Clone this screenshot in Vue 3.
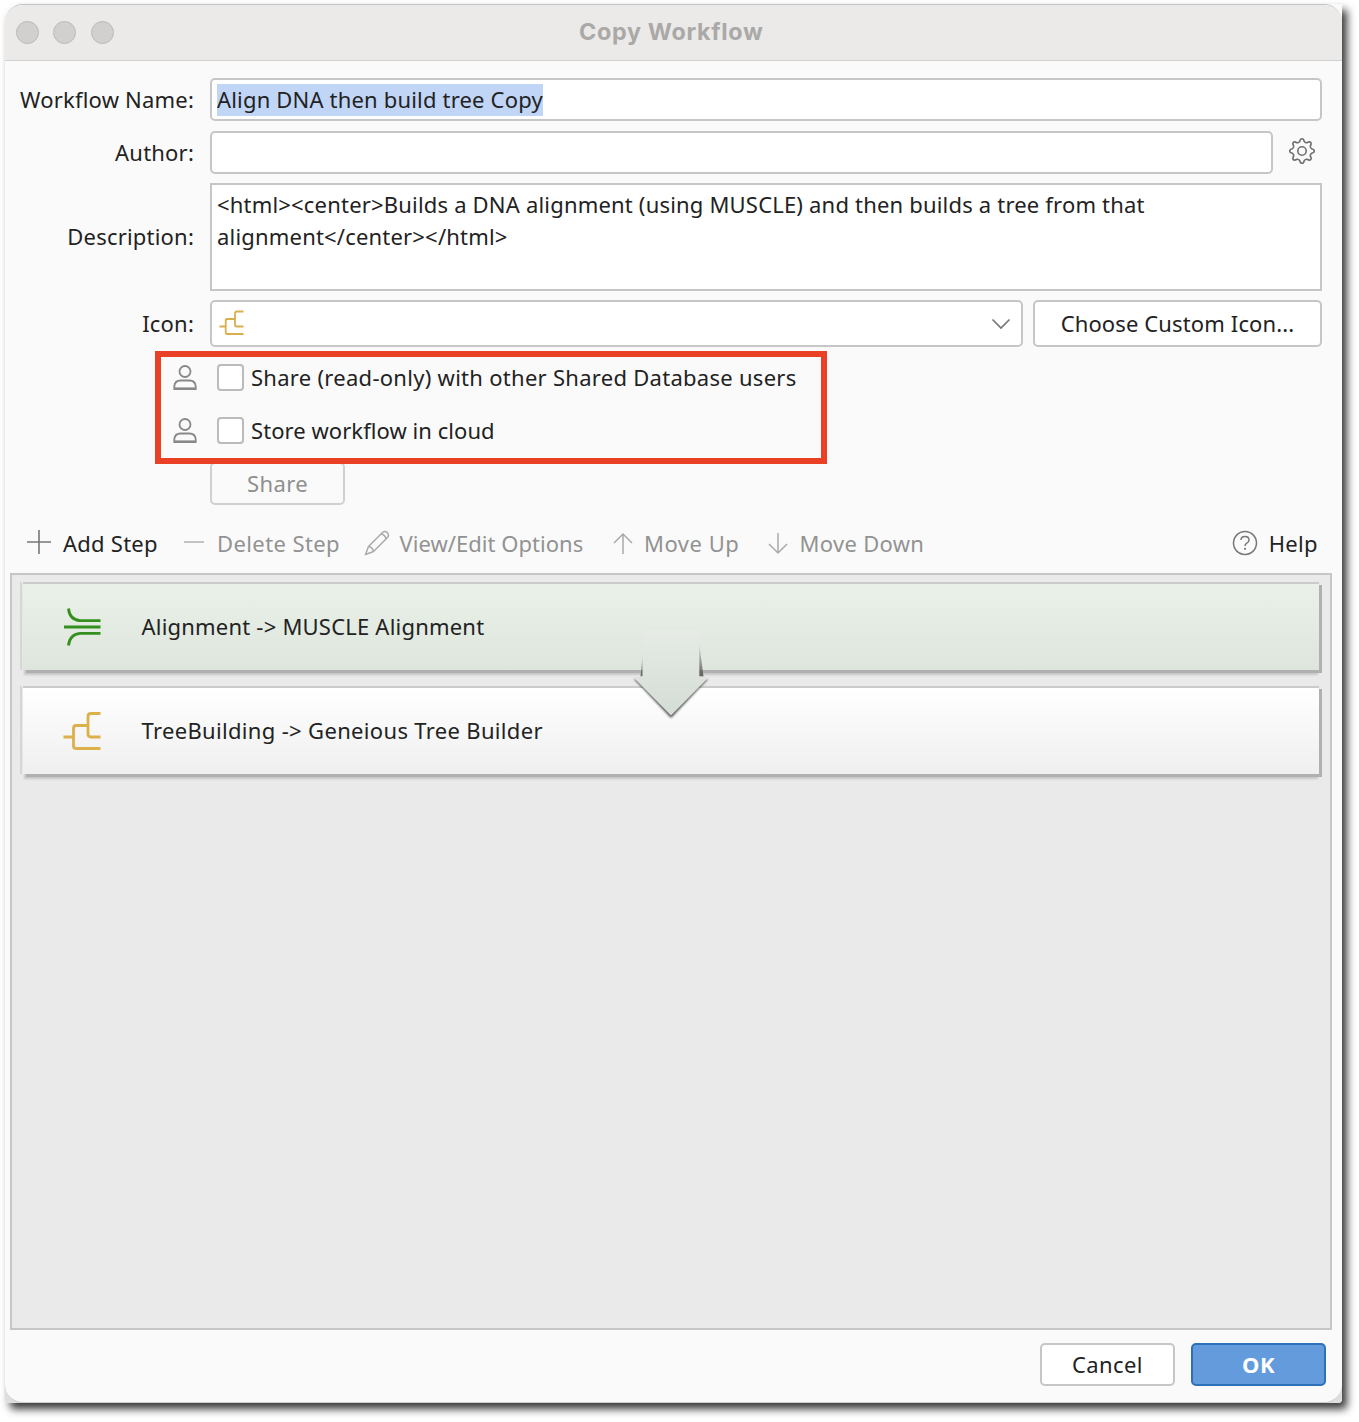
<script setup>
const shareOptions = [
  { label: 'Share (read-only) with other Shared Database users', cls: 't-share' },
  { label: 'Store workflow in cloud', cls: 't-store' },
]
</script>

<template>
  <div class="page">
    <div class="shell">
      <div class="window">
        <header class="titlebar">
          <div class="lights"><i></i><i></i><i></i></div>
          <h1><span>Copy Workflow</span></h1>
        </header>

        <main class="form">
          <div class="row name">
            <label><span class="t-name">Workflow Name:</span></label>
            <div class="field"><span class="selected"><span class="t-value">Align DNA then build tree Copy</span></span></div>
          </div>
          <div class="row author">
            <label><span class="t-author">Author:</span></label>
            <div class="field"></div>
            <svg class="gear" width="28" height="28" viewBox="-14 -14 28 28" fill="none" stroke="#707070" stroke-width="1.6" stroke-linejoin="round">
              <path d="M-2.3 -9.500Q-1.700 -12.300 0 -12.300Q1.700 -12.300 2.300 -9.500Q3.500 -8 5 -8.300Q7.500 -9.800 8.700 -8.700Q9.800 -7.500 8.300 -5Q8 -3.500 9.500 -2.300Q12.300 -1.700 12.300 0Q12.300 1.700 9.500 2.300Q8 3.500 8.300 5Q9.800 7.500 8.700 8.700Q7.500 9.800 5 8.300Q3.500 8 2.300 9.500Q1.700 12.300 0 12.300Q-1.700 12.300 -2.300 9.500Q-3.500 8 -5 8.300Q-7.500 9.800 -8.700 8.700Q-9.800 7.500 -8.300 5Q-8 3.500 -9.500 2.300Q-12.300 1.700 -12.300 0Q-12.300 -1.700 -9.500 -2.300Q-8 -3.500 -8.300 -5Q-9.800 -7.500 -8.700 -8.700Q-7.500 -9.800 -5 -8.300Q-3.500 -8 -2.300 -9.500Z" />
              <circle r="4.2" />
            </svg>
          </div>
          <div class="row description">
            <label><span class="t-desc">Description:</span></label>
            <div class="field area">
              <p><span class="t-d1">&lt;html&gt;&lt;center&gt;Builds a DNA alignment (using MUSCLE) and then builds a tree from that</span></p>
              <p><span class="t-d2">alignment&lt;/center&gt;&lt;/html&gt;</span></p>
            </div>
          </div>
          <div class="row icon">
            <label><span class="t-icon">Icon:</span></label>
            <div class="field combo">
              <svg width="26" height="28" viewBox="0 0 26 28" fill="none" stroke="#d9ae4c" stroke-width="1.8">
                <path d="M0.5 16.5H7M24.5 24H8.5Q6.700 24 6.700 22V10.500Q6.700 9 8.500 9H15.500M24.500 1.500H18Q16 1.500 16 3.500V14.500Q16 16.500 18 16.500H24.500" />
              </svg>
              <svg class="chevron" width="20" height="12" viewBox="0 0 20 12" fill="none" stroke="#777" stroke-width="1.7"><path d="M1.500 1.500L10 10L18.500 1.500" /></svg>
            </div>
            <button class="custom"><span class="t-custom">Choose Custom Icon...</span></button>
          </div>

          <div class="sharing">
            <div v-for="o in shareOptions" :key="o.label" class="option">
              <svg width="26" height="28" viewBox="0 0 26 28" fill="none" stroke="#888" stroke-width="1.8">
                <circle cx="13" cy="7.500" r="5.500" />
                <path d="M2.300 25V22Q3 16.500 8.500 16.500H17.500Q23 16.500 23.700 22V25Z" />
                <path d="M2.300 24.700H23.700" stroke-width="2.600" />
              </svg>
              <i class="check"></i>
              <span class="opt-label" :class="o.cls">{{ o.label }}</span>
            </div>
            <div class="highlight"></div>
          </div>
          <button class="share"><span class="t-sharebtn">Share</span></button>
        </main>

        <nav class="toolbar">
          <span class="tool add">
            <svg width="26" height="26" viewBox="0 0 26 26" fill="none" stroke="#777" stroke-width="1.600"><path d="M1 13H25M13 1V25" /></svg>
            <span class="t-add">Add Step</span>
          </span>
          <span class="tool del off">
            <svg width="22" height="26" viewBox="0 0 22 26" fill="none" stroke="#b5b5b5" stroke-width="1.600"><path d="M1 13H21" /></svg>
            <span class="t-del">Delete Step</span>
          </span>
          <span class="tool edit off">
            <svg width="26" height="26" viewBox="0 0 26 26" fill="none" stroke="#aaa" stroke-width="1.500" stroke-linejoin="round">
              <path d="M1.500 24.500L4.500 16.500L18.500 2.500Q21 .5 23.300 2.700Q25.500 5 23.500 7.500L9.500 21.500ZM4.500 16.500Q8.500 17 9.500 21.500M17 4Q21 4.500 22 9" />
            </svg>
            <span class="t-edit">View/Edit Options</span>
          </span>
          <span class="tool up off">
            <svg width="22" height="24" viewBox="0 0 22 24" fill="none" stroke="#aaa" stroke-width="1.500"><path d="M11 22V2M2 11L11 2L20 11" /></svg>
            <span class="t-up">Move Up</span>
          </span>
          <span class="tool down off">
            <svg width="22" height="24" viewBox="0 0 22 24" fill="none" stroke="#aaa" stroke-width="1.500"><path d="M11 1V21M2 12L11 21L20 12" /></svg>
            <span class="t-down">Move Down</span>
          </span>
          <span class="tool help">
            <svg width="26" height="26" viewBox="0 0 26 26" fill="none" stroke="#777" stroke-width="1.500">
              <circle cx="13" cy="13" r="11.500" />
              <path d="M9 10Q9 6.500 13 6.500Q17 6.500 17 10Q17 12 14.800 13.200Q13 14.200 13 16" />
              <circle cx="13" cy="18.800" r="1.100" fill="#777" stroke="none" />
            </svg>
            <span class="t-help">Help</span>
          </span>
        </nav>

        <section class="steps">
          <article class="step green">
            <svg width="40" height="40" viewBox="0 0 40 40" fill="none" stroke="#348f1e" stroke-width="2.800">
              <path d="M1 20H37.500M37.500 13.700H17Q6.500 12.500 5.500 1.500M37.500 26.300H17Q6.500 27.500 5.500 38.500" />
            </svg>
            <span class="t-s1">Alignment -&gt; MUSCLE Alignment</span>
          </article>
          <article class="step">
            <svg width="40" height="40" viewBox="0 0 40 40" fill="none" stroke="#dcb04a" stroke-width="2.800">
              <path d="M.5 26H10.500M37.500 37.500H13Q10.500 37.500 10.500 35V17.500Q10.500 14.500 13 14.500H24.500M37.500 2.500H28Q25 2.500 25 5.500V23Q25 26 28 26H37.500" />
            </svg>
            <span class="t-s2">TreeBuilding -&gt; Geneious Tree Builder</span>
          </article>
          <svg class="arrow" width="90" height="100" viewBox="0 0 90 100">
            <defs>
              <linearGradient id="arrowFill" x1="0" y1="0" x2="0" y2="1"><stop offset="0" stop-color="#e6ece5" /><stop offset="1" stop-color="#d3dcd5" /></linearGradient>
              <linearGradient id="sideFade" x1="0" y1="0" x2="0" y2="1"><stop offset="0" stop-color="#555" stop-opacity="0" /><stop offset="1" stop-color="#555" stop-opacity=".9" /></linearGradient>
              <filter id="soft" x="-20%" y="-20%" width="140%" height="150%"><feGaussianBlur stdDeviation="1.100" /></filter>
            </defs>
            <path d="M8 49L82 49L45 88Z" fill="#444" opacity=".9" filter="url(#soft)" />
            <path d="M16.700 24V46.500H14.500Z" fill="url(#sideFade)" />
            <path d="M73 12V46.500H77.500Z" fill="url(#sideFade)" />
            <path d="M16.700 0H73.300V46.500H76L82 48L45 85.500L8 48L14 46.500H16.700Z" fill="url(#arrowFill)" />
          </svg>
        </section>

        <footer class="actions">
          <button><span class="t-cancel">Cancel</span></button>
          <button class="primary"><span class="t-ok">OK</span></button>
        </footer>
      </div>
    </div>
  </div>
</template>

<style>
body { margin: 0; background: #fff; }
</style>

<style scoped>
* { box-sizing: border-box; }
.page {
  width: 1359px; height: 1422px; padding: 4px 0 0 5px; overflow: hidden; background: #fff;
  font-family: "Noto Sans", sans-serif; font-size: 22px; line-height: 32px; color: #222;
}
.shell {
  width: 1337px; height: 1399px; background: linear-gradient(#fafafa 50%, #dedede 50%);
  border-radius: 12px 0 4px 4px; box-shadow: 5px 6px 9px rgba(0, 0, 0, .78);
}
.window {
  height: 1399px; display: flex; flex-direction: column; overflow: hidden;
  border-radius: 18px; background: #fafafa; border-top: 1px solid #c4c4c4; border-bottom: 1px solid #ccc;
}
.titlebar {
  height: 56px; flex: none; display: flex; align-items: center; padding-left: 10.500px; padding-bottom: 1px;
  background: #ebeae8; border-bottom: 1.500px solid #d0d0d0;
}
.lights { display: flex; gap: 14.800px; width: 110px; }
.lights i { width: 23px; height: 23px; border-radius: 50%; background: #d1d0ce; border: 1.500px solid #bab9b7; }
h1 { margin: 0; padding-right: 125px; flex: 1; text-align: center; font: 700 23.300px/30px Inter, sans-serif; letter-spacing: .7px; color: #aaa9a7; }
.form { position: relative; z-index: 0; flex: none; height: 446px; padding: 17px 20px 0 0; display: flex; flex-direction: column; }
.row { display: flex; align-items: center; flex: none; }
label { width: 189px; margin-right: 16px; padding-bottom: 2px; text-align: right; white-space: nowrap; letter-spacing: .2px; }
span { white-space: nowrap; }
.field { flex: 1; height: 100%; background: #fff; border: 2px solid #c6c6c6; border-radius: 5px; display: flex; align-items: center; padding-left: 5px; }
.name { height: 43px; margin-bottom: 10px; }
.selected { background: #c1d5f6; height: 32px; display: flex; line-height: 30px; letter-spacing: .18px; }
.author { height: 43px; margin-bottom: 9px; }
.gear { margin: 0 6px 3px 15px; }
.description { height: 108px; margin-bottom: 9px; }
.area { border-radius: 0; display: block; padding-top: 3px; }
.area p { margin: 0; letter-spacing: .19px; }
.icon { height: 47px; margin-bottom: 4px; }
.combo { justify-content: space-between; padding: 0 10px 0 7px; }
button {
  font: inherit; color: #222; background: #fff; border: 2px solid #c6c6c6; border-radius: 5px; letter-spacing: .4px;
  padding: 0 0 1px; display: flex; align-items: center; justify-content: center; width: 135px; height: 43px;
}
.icon .custom { width: 289px; height: 47px; margin-left: 10px; letter-spacing: .13px; }
.sharing { position: relative; width: 672px; height: 113px; margin-left: 150px; flex: none; }
.option { height: 53px; display: flex; align-items: center; padding-left: 17px; }
.check { width: 27px; height: 27px; margin: 0 7px 0 19px; border: 2px solid #bbb; border-radius: 4px; background: #fff; }
.opt-label { padding-bottom: 1px; }
.t-share { letter-spacing: .28px; }
.t-store { letter-spacing: .06px; }
.highlight { position: absolute; inset: 0; border: 6px solid #ea4025; }
.share { margin: -2px 0 0 205px; background: #fafafa; border-color: #d0d0d0; color: #8e8e8e; flex: none; position: relative; z-index: -1; }
.toolbar { height: 66px; flex: none; display: flex; align-items: center; padding: 5px 24px 0 21px; }
.tool { display: flex; align-items: center; color: #222; }
.add svg, .del svg { margin-bottom: 1px; }
.edit svg { margin-top: 1px; }
.up svg, .down svg { margin-top: 2px; }
.off { color: #929292; }
.add { width: 157px; gap: 11px; letter-spacing: .25px; }
.del { width: 181px; gap: 12px; letter-spacing: .4px; }
.edit { width: 248px; gap: 9.500px; letter-spacing: .03px; }
.up { width: 154.500px; gap: 10px; letter-spacing: .5px; }
.down { gap: 11px; letter-spacing: .3px; }
.help { margin-left: auto; gap: 11px; letter-spacing: .35px; }
.help svg { margin-top: 1px; }
.steps {
  position: relative; height: 757px; flex: none; margin: 0 10px 0 5px; padding: 7px 9px 0 11px;
  background: #eaeaea; border: 2px solid #c6c6c6;
}
.step {
  height: 88px; margin: 0 2px 16px 0; display: flex; align-items: center; gap: 38.500px; padding: 0 0 1px 40px;
  background: linear-gradient(#fff, #efefef); border-top: 2px solid #cbcbcb;
  box-shadow: 3px 3px 0 #b0b0b0, 0 6px 2px -1px #c6c6c6, -1px 0 0 #eaeaea, -3px 0 0 #d6d6d6;
}
.step span { padding-bottom: 2px; }
.t-s1 { letter-spacing: .21px; }
.t-s2 { letter-spacing: .33px; }
.green { background: linear-gradient(#e9f1e8, #dde5dc); }
.arrow { position: absolute; left: 614px; top: 55px; }
.actions { display: flex; justify-content: flex-end; gap: 16px; padding: 13px 16px 0 0; }
.primary { background: #649bdc; border-color: #2e71b8; color: #fff; font-weight: 700; }
</style>
